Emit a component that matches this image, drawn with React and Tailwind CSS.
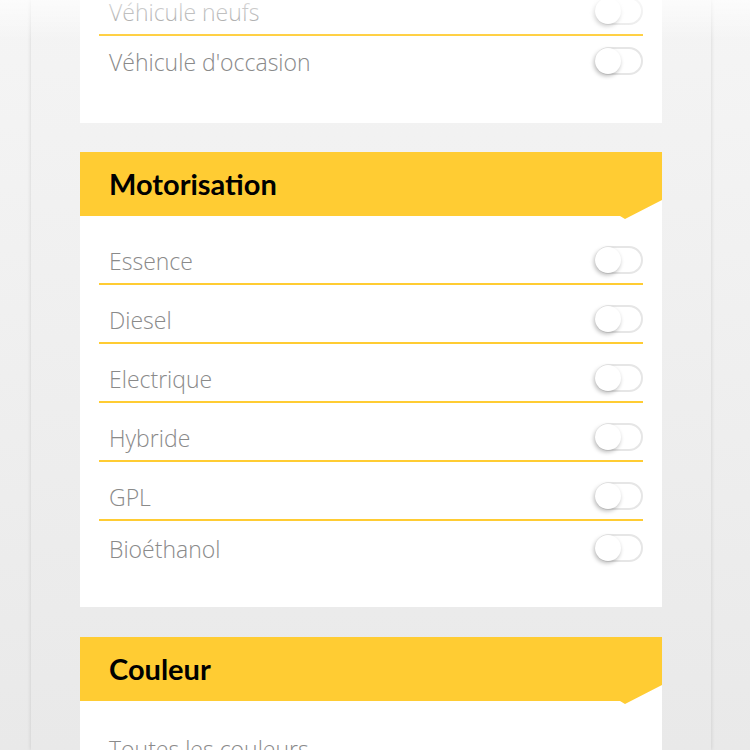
import React from "react";

const LABEL = { fontFamily: "'Open Sans', 'Liberation Sans', sans-serif" };

function Toggle() {
  return (
    <div className="relative h-[28px] w-[48px] shrink-0 rounded-full border-2 border-[#e6e6e6] bg-white">
      <div className="absolute left-[-2px] top-[-1px] h-[26px] w-[26px] rounded-full bg-white shadow-[-1px_2px_4px_rgba(0,0,0,0.28)]" />
    </div>
  );
}

function Row({ label, last, pt = "pt-5", noToggle }) {
  return (
    <div
      className={`flex h-auto items-center justify-between ${pt} pb-[9px] ${
        last ? "" : "border-b-2 border-[#ffcc33]"
      }`}
    >
      <span
        className="relative top-[1px] pl-[10px] text-[23px] font-light leading-[28px] text-[#8a8a8a]"
        style={LABEL}
      >
        {label}
      </span>
      {noToggle ? <div className="h-[28px]" /> : <Toggle />}
    </div>
  );
}

function Header({ title }) {
  return (
    <div className="-mb-[3px] flex h-[67px] items-start bg-[#ffcc33] [clip-path:polygon(0_0,100%_0,100%_48px,calc(100%-37px)_67px,calc(100%-42px)_64px,0_64px)]">
      <div className="flex h-[62px] items-center pl-[29px]">
        <span
          className="text-[29px] font-bold leading-none text-black"
          style={{ fontFamily: "Lato, 'Liberation Sans', sans-serif" }}
        >
          {title}
        </span>
      </div>
    </div>
  );
}

export default function App() {
  const motor = ["Essence", "Diesel", "Electrique", "Hybride", "GPL", "Bioéthanol"];
  return (
    <div className="relative h-[750px] w-[750px] overflow-hidden bg-gradient-to-b from-[#f5f5f5] to-[#e9e9e9]">
      <div className="ml-[31px] flex h-full w-[680px] flex-col bg-gradient-to-b from-[#f4f4f4] to-[#e9e9e9] px-[49px] shadow-[0_0_4px_rgba(0,0,0,0.14)]">
        <div className="-mt-[23px] bg-white px-[19px] pb-[39px]">
          <Row label="Véhicule neufs" />
          <Row label="Véhicule d'occasion" last pt="pt-[11px]" />
        </div>

        <div className="mt-[29px] shrink-0 bg-white">
          <Header title="Motorisation" />
          <div className="px-[19px] pb-[36px] pt-[10px]">
            {motor.map((m, i) => (
              <Row
                key={m}
                label={m}
                last={i === motor.length - 1}
                pt={i === motor.length - 1 ? "pt-[13px]" : "pt-5"}
              />
            ))}
          </div>
        </div>

        <div className="mt-[30px] shrink-0 bg-white">
          <Header title="Couleur" />
          <div className="px-[19px] pb-[36px] pt-[13px]">
            <Row label="Toutes les couleurs" noToggle />
          </div>
        </div>
      </div>
      <div className="pointer-events-none absolute left-0 right-0 top-0 h-[40px] bg-gradient-to-b from-white/70 to-white/0" />
    </div>
  );
}
